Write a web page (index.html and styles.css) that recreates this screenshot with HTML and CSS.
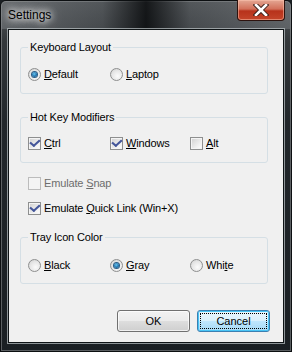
FILE: index.html
```html
<!DOCTYPE html>
<html lang="en">
<head>
    <meta charset="UTF-8">
    <title>Settings</title>
    <link rel="stylesheet" href="styles.css">
</head>
<body>

<div class="window">
    <!-- Title bar -->
    <div class="titlebar">
        <span class="title">Settings</span>
        <button class="closeButton">
            <svg width="16" height="12" viewBox="0 0 16 12">
                <path d="M3 1 L13 11 M13 1 L3 11" stroke="#3a1f1a" stroke-width="4.5" stroke-linecap="square"/>
                <path d="M3 1 L13 11 M13 1 L3 11" stroke="#ffffff" stroke-width="2.6" stroke-linecap="square"/>
            </svg>
        </button>
    </div>

    <div class="client">
        <fieldset class="group group1">
            <legend>Keyboard Layout</legend>
            <div class="row">
                <label class="option"><span class="radio checked"></span><span><u>D</u>efault</span></label>
                <label class="option"><span class="radio"></span><span><u>L</u>aptop</span></label>
            </div>
        </fieldset>

        <fieldset class="group group2">
            <legend>Hot Key Modifiers</legend>
            <div class="row">
                <label class="option"><span class="check checked"></span><span><u>C</u>trl</span></label>
                <label class="option"><span class="check checked"></span><span><u>W</u>indows</span></label>
                <label class="option"><span class="check"></span><span><u>A</u>lt</span></label>
            </div>
        </fieldset>

        <label class="option single disabled"><span class="check"></span><span>Emulate <u>S</u>nap</span></label>
        <label class="option single quick"><span class="check checked"></span><span>Emulate <u>Q</u>uick Link (Win+X)</span></label>

        <fieldset class="group group3">
            <legend>Tray Icon Color</legend>
            <div class="row">
                <label class="option"><span class="radio"></span><span><u>B</u>lack</span></label>
                <label class="option"><span class="radio checked"></span><span><u>G</u>ray</span></label>
                <label class="option"><span class="radio"></span><span>Whi<u>t</u>e</span></label>
            </div>
        </fieldset>

        <div class="buttons">
            <button class="btn">OK</button>
            <button class="btn default"><span class="focus">Cancel</span></button>
        </div>
    </div>
</div>

</body>
</html>
```

FILE: styles.css
```css
body {
    margin: 0;
    padding: 0;
    background: #1a1f23;
    font-family: "Liberation Sans", Arial, sans-serif;
    font-size: 11px;
}

/* Window frame */
.window {
    width: 292px;
    height: 352px;
    box-sizing: border-box;
    border: 1px solid #0c0f11;
    border-radius: 6px 6px 0 0;
    background: linear-gradient(to bottom, #55595c 0px, #34383b 40px, #22272b 120px, #1a1f23 352px);
    box-shadow: inset 0 0 0 1px rgba(255, 255, 255, 0.28);
    display: flex;
    flex-direction: column;
}

.titlebar {
    height: 28px;
    display: flex;
    align-items: flex-start;
    background: linear-gradient(to right,
        rgba(120, 124, 128, 0.55) 0%,
        rgba(80, 84, 88, 0.4) 35%,
        rgba(10, 12, 14, 0.85) 50%,
        rgba(80, 84, 88, 0.4) 65%,
        rgba(120, 124, 128, 0.55) 100%);
    border-radius: 5px 5px 0 0;
}

.title {
    margin: 7px 0 0 7px;
    font-family: "Liberation Sans", Arial, sans-serif;
    font-size: 12px;
    color: #000;
    text-shadow: 0 0 6px #fff, 0 0 10px #fff, 0 0 14px rgba(255, 255, 255, 0.8);
}

.closeButton {
    margin: -1px 6px 0 auto;
    width: 48px;
    height: 21px;
    padding: 0;
    border: 1px solid #2d130e;
    border-top: none;
    border-radius: 0 0 4px 4px;
    background: linear-gradient(to bottom, #e4a793 0%, #d2705a 45%, #b7321b 55%, #c4452a 100%);
    box-shadow: inset 0 0 0 1px rgba(255, 200, 180, 0.5);
    display: flex;
    justify-content: center;
    align-items: center;
}

/* Client area */
.client {
    margin: 0 7px 0 7px;
    height: 314px;
    box-sizing: border-box;
    border: 1px solid #0f1416;
    background: #f0f0f0;
    box-shadow: 0 0 0 1px rgba(190, 196, 200, 0.7);
    display: flex;
    flex-direction: column;
    color: #000;
    letter-spacing: -0.15px;
}

.group {
    margin: 0 15px 0 11px;
    padding: 11px 0 11px 7px;
    border: 1px solid #d5dfe5;
    border-radius: 3px;
    min-width: 0;
}

.group legend {
    padding: 0 2px;
    margin-left: 0;
    line-height: 13px;
}

.group1 {
    margin-top: 11px;
    padding-top: 12px;
}

.group2 {
    margin-top: 17px;
}

.group3 {
    margin-top: 15px;
    padding-top: 13px;
    padding-bottom: 10px;
}

.row {
    display: grid;
    grid-template-columns: 82px 80px auto;
}

.option {
    display: flex;
    align-items: center;
    height: 16px;
    white-space: nowrap;
}

.single {
    margin: 12px 0 0 19px;
}

.quick {
    margin-top: 9px;
}

.disabled {
    color: #6d6d6d;
}

/* Radio buttons */
.radio {
    position: relative;
    width: 13px;
    height: 13px;
    box-sizing: border-box;
    margin-right: 3px;
    border: 1px solid #8e8f8f;
    border-radius: 50%;
    background: radial-gradient(circle at 60% 65%, #fbfbfb 0%, #e6e6e6 55%, #cdcdcd 100%);
}

.radio.checked::after {
    content: "";
    position: absolute;
    left: 3px;
    top: 3px;
    width: 5px;
    height: 5px;
    border-radius: 50%;
    background: radial-gradient(circle at 45% 40%, #6cc8f0 0%, #1f74b0 55%, #0b3f6a 100%);
    box-shadow: 0 0 0 1px #2a5d86;
}

/* Check boxes */
.check {
    position: relative;
    width: 13px;
    height: 13px;
    box-sizing: border-box;
    margin-right: 3px;
    border: 1px solid #8e8f8f;
    background: linear-gradient(135deg, #d0d0d0 0%, #f2f2f2 70%, #ffffff 100%);
    box-shadow: inset 0 0 0 1px #f4f4f4;
}

.disabled .check {
    border-color: #bcbcbc;
    background: #f4f4f4;
    box-shadow: none;
}

.check.checked::after {
    content: "";
    position: absolute;
    left: 2px;
    top: 0px;
    width: 4px;
    height: 7px;
    border: solid #44569a;
    border-width: 0 2px 2px 0;
    transform: rotate(40deg) skewX(-8deg);
    transform-origin: 70% 60%;
}

/* Buttons */
.buttons {
    margin-top: auto;
    margin-bottom: 10px;
    margin-right: 13px;
    display: flex;
    justify-content: flex-end;
    gap: 7px;
}

.btn {
    width: 73px;
    height: 22px;
    padding: 0;
    border: 1px solid #707070;
    border-radius: 3px;
    font-family: "Liberation Sans", Arial, sans-serif;
    font-size: 11px;
    color: #000;
    background: linear-gradient(to bottom, #f2f2f2 0%, #ebebeb 48%, #dddddd 52%, #cfcfcf 100%);
    box-shadow: inset 0 0 0 1px rgba(255, 255, 255, 0.7);
}

.btn.default {
    border-color: #3c7fb1;
    background: linear-gradient(to bottom, #eaf6fd 0%, #d9f0fc 48%, #bee6fd 52%, #a7d9f5 100%);
    box-shadow: inset 0 0 0 1px #48c4f5;
    display: flex;
    align-items: stretch;
    justify-content: stretch;
}

.focus {
    flex: 1;
    margin: 2px;
    border: 1px dotted #000;
    display: flex;
    align-items: center;
    justify-content: center;
}
```
